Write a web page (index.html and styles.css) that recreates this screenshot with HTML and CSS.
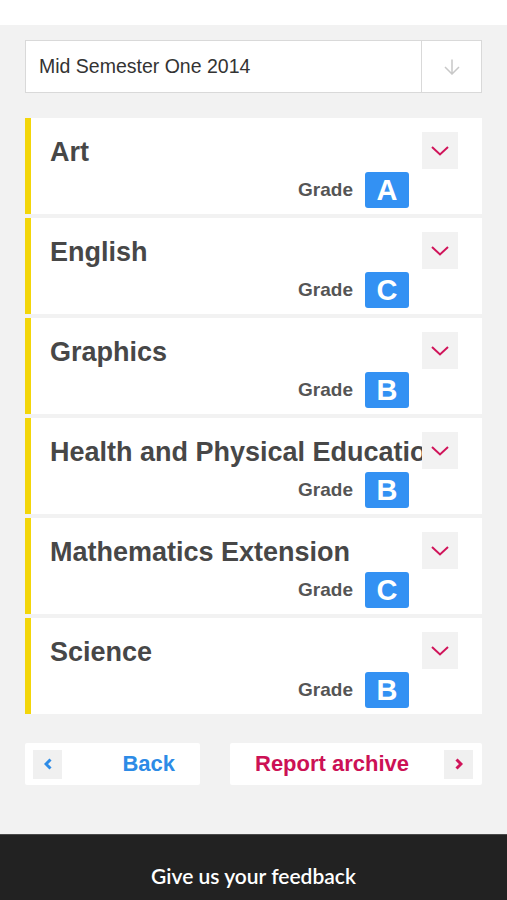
FILE: index.html
```html
<!DOCTYPE html>
<html lang="en">
<head>
  <meta charset="UTF-8" />
  <meta name="viewport" content="width=device-width, initial-scale=1.0" />
  <title>Reports</title>
  <link rel="stylesheet" href="styles.css">
</head>
<body>
  <div class="topbar"></div>

  <div class="page">
    <div class="select">
      <div class="select-label">Mid Semester One 2014</div>
      <div class="select-btn">
        <svg width="18" height="16" viewBox="0 0 18 16"><path d="M9 0.5 V15 M2 8 L9 15 L16 8" fill="none" stroke="#c8c8c8" stroke-width="1.5"/></svg>
      </div>
    </div>

    <div class="subjects">
      <div class="subject">
        <div class="subject-main">
          <div class="subject-title">Art</div>
          <div class="grade-row"><span class="grade-label">Grade</span><span class="grade">A</span></div>
        </div>
        <div class="toggle"><svg width="18" height="10" viewBox="0 0 18 10"><path d="M1 1 L9 8.5 L17 1" fill="none" stroke="#d0145a" stroke-width="2"/></svg></div>
      </div>
      <div class="subject">
        <div class="subject-main">
          <div class="subject-title">English</div>
          <div class="grade-row"><span class="grade-label">Grade</span><span class="grade">C</span></div>
        </div>
        <div class="toggle"><svg width="18" height="10" viewBox="0 0 18 10"><path d="M1 1 L9 8.5 L17 1" fill="none" stroke="#d0145a" stroke-width="2"/></svg></div>
      </div>
      <div class="subject">
        <div class="subject-main">
          <div class="subject-title">Graphics</div>
          <div class="grade-row"><span class="grade-label">Grade</span><span class="grade">B</span></div>
        </div>
        <div class="toggle"><svg width="18" height="10" viewBox="0 0 18 10"><path d="M1 1 L9 8.5 L17 1" fill="none" stroke="#d0145a" stroke-width="2"/></svg></div>
      </div>
      <div class="subject">
        <div class="subject-main">
          <div class="subject-title">Health and Physical Education</div>
          <div class="grade-row"><span class="grade-label">Grade</span><span class="grade">B</span></div>
        </div>
        <div class="toggle"><svg width="18" height="10" viewBox="0 0 18 10"><path d="M1 1 L9 8.5 L17 1" fill="none" stroke="#d0145a" stroke-width="2"/></svg></div>
      </div>
      <div class="subject">
        <div class="subject-main">
          <div class="subject-title">Mathematics Extension</div>
          <div class="grade-row"><span class="grade-label">Grade</span><span class="grade">C</span></div>
        </div>
        <div class="toggle"><svg width="18" height="10" viewBox="0 0 18 10"><path d="M1 1 L9 8.5 L17 1" fill="none" stroke="#d0145a" stroke-width="2"/></svg></div>
      </div>
      <div class="subject">
        <div class="subject-main">
          <div class="subject-title">Science</div>
          <div class="grade-row"><span class="grade-label">Grade</span><span class="grade">B</span></div>
        </div>
        <div class="toggle"><svg width="18" height="10" viewBox="0 0 18 10"><path d="M1 1 L9 8.5 L17 1" fill="none" stroke="#d0145a" stroke-width="2"/></svg></div>
      </div>
    </div>

    <div class="nav">
      <a class="nav-btn back">
        <span class="nav-icon"><svg width="8" height="12" viewBox="0 0 8 12"><path d="M6.5 1.5 L2 6 L6.5 10.5" fill="none" stroke="#2d8be6" stroke-width="3"/></svg></span>
        <span class="nav-text">Back</span>
      </a>
      <a class="nav-btn archive">
        <span class="nav-text">Report archive</span>
        <span class="nav-icon"><svg width="8" height="12" viewBox="0 0 8 12"><path d="M1.5 1.5 L6 6 L1.5 10.5" fill="none" stroke="#d0145a" stroke-width="3"/></svg></span>
      </a>
    </div>
  </div>

  <div class="footer">Give us your feedback</div>
</body>
</html>
```

FILE: styles.css
```css
body { margin: 0; padding: 0; background: #f2f2f2; font-family: 'Liberation Sans', Arial, sans-serif; color: #444; }
.topbar { height: 25px; background: #fff; }
.page { padding: 15px 25px 49px; }

.select { display: flex; height: 51px; background: #fff; border: 1px solid #d9d9d9; }
.select-label { flex: 1; display: flex; align-items: center; padding-left: 13px; font-size: 19.5px; color: #333; }
.select-btn { width: 59px; border-left: 1px solid #d9d9d9; display: flex; align-items: center; justify-content: center; }

.subjects { margin-top: 25px; display: flex; flex-direction: column; gap: 4px; }
.subject { display: flex; height: 96px; background: #fff; border-left: 6px solid #f3d60a; box-sizing: border-box; }
.subject-main { flex: 1; min-width: 0; padding: 18px 0 0 19px; }
.subject-title { font-size: 27px; font-weight: bold; line-height: 32px; color: #474747; white-space: nowrap; overflow: hidden; }
.grade-row { display: flex; justify-content: flex-end; align-items: center; gap: 12px; margin-top: 4px; padding-right: 13px; }
.grade-label { font-size: 19px; font-weight: bold; color: #555; }
.grade { width: 44px; height: 36px; border-radius: 3px; background: #3391f3; color: #fff; font-size: 29px; font-weight: bold; display: flex; align-items: center; justify-content: center; }
.toggle { width: 36px; height: 37px; margin: 14px 24px 0 0; background: #f2f2f2; display: flex; align-items: center; justify-content: center; }

.nav { display: flex; gap: 30px; margin-top: 29px; }
.nav-btn { display: flex; align-items: center; height: 42px; background: #fff; border-radius: 2px; font-size: 22px; font-weight: bold; }
.nav-icon { width: 29px; height: 29px; background: #f0f0f0; display: flex; align-items: center; justify-content: center; }
.back { width: 175px; color: #2d8be6; }
.back .nav-icon { margin-left: 8px; }
.back .nav-text { margin-left: auto; padding-right: 25px; }
.archive { flex: 1; color: #cc1155; }
.archive .nav-text { padding-left: 25px; }
.archive .nav-icon { margin-left: auto; margin-right: 9px; }

.footer { height: 65px; background: #222; border-top: 1px solid #4a4a4a; color: #fff; font-family: Lato, 'Open Sans', sans-serif; font-size: 21px; font-weight: 600; text-align: center; line-height: 82px; }
```
